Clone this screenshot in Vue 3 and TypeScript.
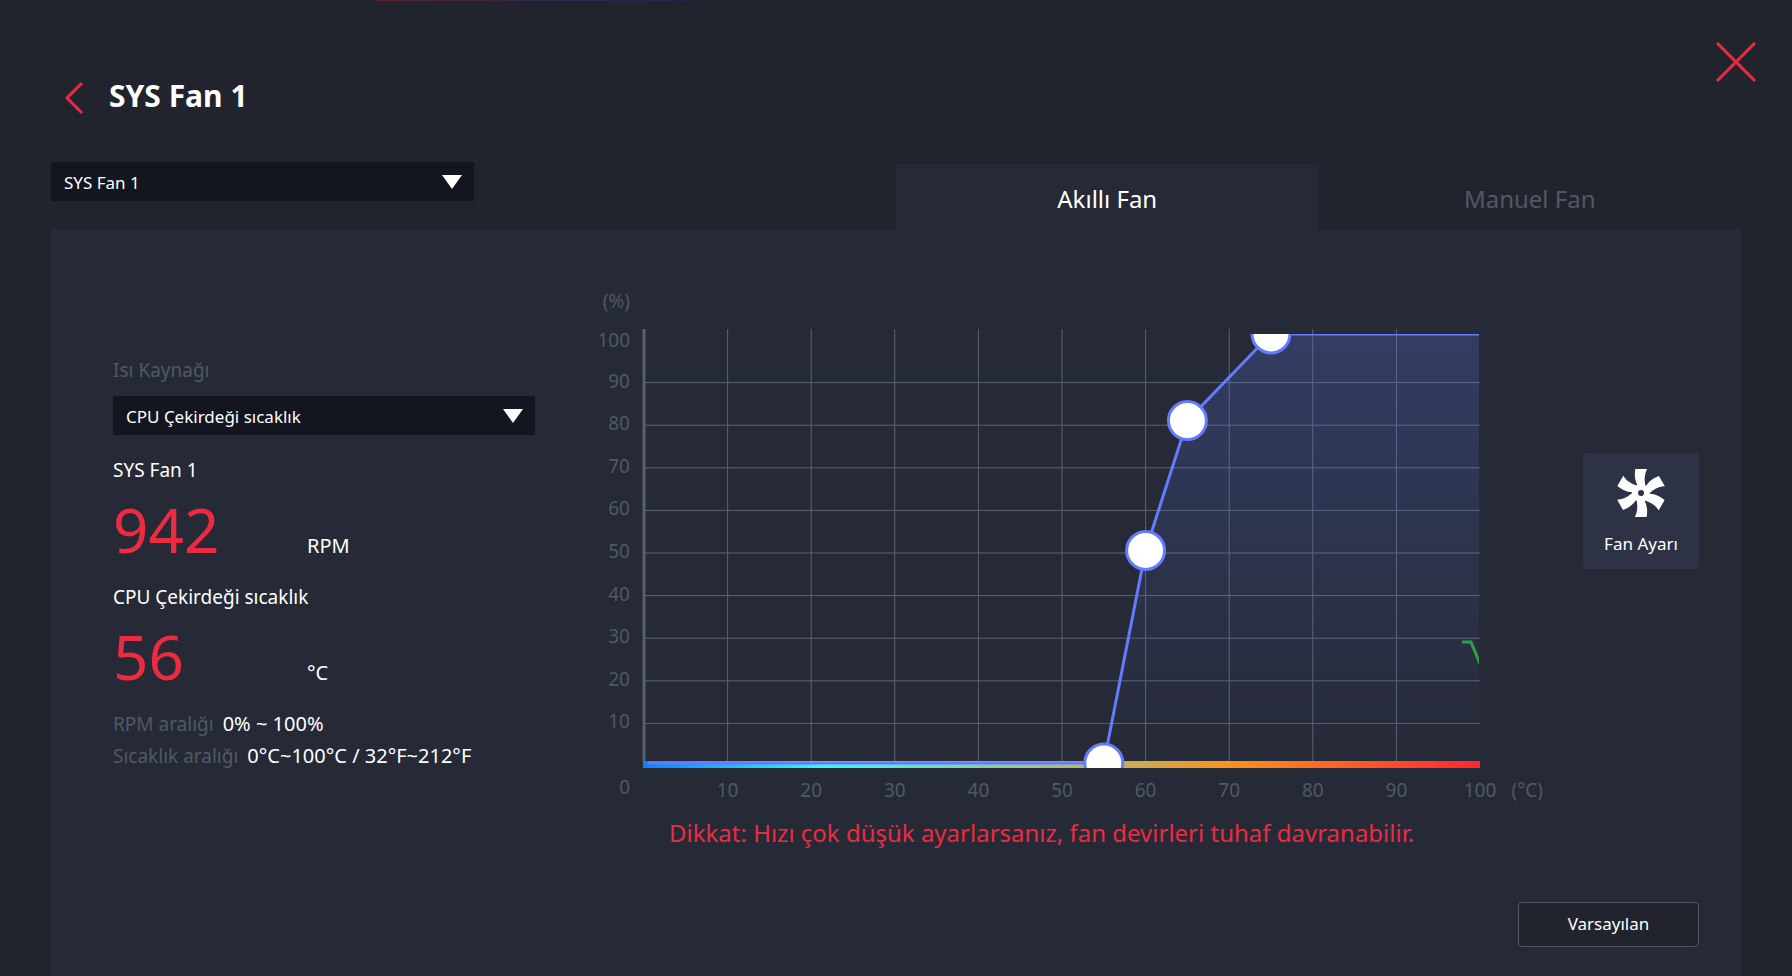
<script setup lang="ts">
import { computed, ref } from 'vue'

interface Point {
  temp: number
  duty: number
}

const fans = ['SYS Fan 1', 'SYS Fan 2', 'CPU Fan 1']
const sources = ['CPU Çekirdeği sıcaklık', 'Sistem sıcaklık']
const tabs = ['Akıllı Fan', 'Manuel Fan']

const fan = ref(fans[0])
const source = ref(sources[0])
const activeTab = ref(tabs[0])
const rpm = ref(942)
const temperature = ref(56)

const points = ref<Point[]>([
  { temp: 55, duty: 0 },
  { temp: 60, duty: 50 },
  { temp: 65, duty: 80 },
  { temp: 75, duty: 100 },
])

// Chart geometry, in viewBox units
const left = 50
const right = 885
const top = 49
const bottom = 478
const steps = [1, 2, 3, 4, 5, 6, 7, 8, 9, 10]

const gridX = (temp: number): number => left + (temp * (right + 1 - left)) / 100
const gridY = (duty: number): number => 481 - duty * 4.26
const plotY = (duty: number): number => Math.min(bottom, 482 - (duty * (482 - top)) / 100)
const labelY = (duty: number): number => (duty === 100 ? 62 : gridY(duty) + 5)

const curve = computed(() => {
  const handles = points.value.map((p) => `${gridX(p.temp)},${plotY(p.duty)}`)
  return [`54,${bottom}`, ...handles, `${right},${top}`].join(' ')
})
const area = computed(() => `${curve.value} ${right},483`)
</script>

<template>
  <main class="page">
    <div class="strip"></div>
    <header class="header">
      <button class="icon-button back" type="button" aria-label="Geri">
        <svg width="20" height="34" viewBox="0 0 20 34">
          <path d="M18 2 3 17 18 32" />
        </svg>
      </button>
      <h1 class="title">{{ fan }}</h1>
      <button class="icon-button close" type="button" aria-label="Kapat">
        <svg width="40" height="40" viewBox="0 0 40 40">
          <path d="M1 1 39 39M39 1 1 39" />
        </svg>
      </button>
    </header>

    <div class="toolbar">
      <div class="select fan-select">
        <select v-model="fan" aria-label="Fan">
          <option v-for="name in fans" :key="name">{{ name }}</option>
        </select>
        <svg class="arrow" width="20" height="14" viewBox="0 0 20 14"><path d="M0 0H20L10 14Z" /></svg>
      </div>
      <div class="tabs" role="tablist">
        <button
          v-for="tab in tabs"
          :key="tab"
          class="tab"
          :class="{ active: tab === activeTab }"
          type="button"
          role="tab"
          :aria-selected="tab === activeTab"
          @click="activeTab = tab"
        >{{ tab }}</button>
      </div>
    </div>

    <section class="panel">
      <div class="content">
        <div class="readings">
          <label class="dim" for="source">Isı Kaynağı</label>
          <div class="select source-select">
            <select id="source" v-model="source">
              <option v-for="name in sources" :key="name">{{ name }}</option>
            </select>
            <svg class="arrow" width="20" height="14" viewBox="0 0 20 14"><path d="M0 0H20L10 14Z" /></svg>
          </div>
          <p class="name">{{ fan }}</p>
          <p class="reading"><strong class="value">{{ rpm }}</strong><span class="unit">RPM</span></p>
          <p class="name">{{ source }}</p>
          <p class="reading"><strong class="value">{{ temperature }}</strong><span class="unit">°C</span></p>
          <dl class="ranges">
            <div class="range"><dt class="dim">RPM aralığı</dt><dd>0% ~ 100%</dd></div>
            <div class="range"><dt class="dim">Sıcaklık aralığı</dt><dd>0°C~100°C / 32°F~212°F</dd></div>
          </dl>
        </div>

        <div class="chart">
          <svg class="plot" viewBox="0 0 955 530" role="img" aria-label="Fan eğrisi">
            <defs>
              <linearGradient id="heat">
                <stop offset="0" stop-color="#0a80ff" />
                <stop offset="0.22" stop-color="#3cf8f4" />
                <stop offset="0.7" stop-color="#fa921e" />
                <stop offset="1" stop-color="#ff2530" />
              </linearGradient>
              <linearGradient id="fill" x1="0" y1="0" x2="0" y2="1">
                <stop offset="0" stop-color="#637cff" stop-opacity="0.22" />
                <stop offset="1" stop-color="#637cff" stop-opacity="0" />
              </linearGradient>
              <clipPath id="frame"><rect x="50" y="49" width="835" height="434" /></clipPath>
            </defs>

            <g class="grid">
              <line class="axis" :x1="left" y1="44" :x2="left" y2="477" />
              <line v-for="s in steps.slice(0, 9)" :key="'v' + s" :x1="gridX(s * 10)" y1="44" :x2="gridX(s * 10)" y2="477" />
              <line v-for="s in steps.slice(0, 9)" :key="'h' + s" :x1="left" :y1="gridY(s * 10)" x2="886" :y2="gridY(s * 10)" />
            </g>
            <rect x="49" y="476" width="837" height="7" fill="url(#heat)" />

            <g clip-path="url(#frame)">
              <polygon :points="area" fill="url(#fill)" />
              <polyline :points="curve" class="curve" />
              <circle v-for="p in points" :key="p.temp" class="handle" :cx="gridX(p.temp)" :cy="plotY(p.duty)" r="19" />
              <polyline class="trace" points="868,357 877,357 886,379" />
            </g>

            <g class="labels">
              <text x="36" y="23" text-anchor="end">(%)</text>
              <text v-for="s in steps" :key="'y' + s" x="36" :y="labelY(s * 10)" text-anchor="end">{{ s * 10 }}</text>
              <text x="36" y="509" text-anchor="end">0</text>
              <text v-for="s in steps" :key="'x' + s" :x="gridX(s * 10)" y="512" text-anchor="middle">{{ s * 10 }}</text>
              <text x="949" y="512" text-anchor="end">(°C)</text>
            </g>
          </svg>
          <p class="warning">Dikkat: Hızı çok düşük ayarlarsanız, fan devirleri tuhaf davranabilir.</p>
        </div>

        <button class="fan-button" type="button">
          <svg width="50" height="50" viewBox="-25 -25 50 50">
            <path
              v-for="s in 6"
              :key="s"
              :transform="`rotate(${s * 60})`"
              d="M-5.7-24H6.2C4-20 3-15 4.300-8L2-6H-3L-3.700-8C-6-13-6.700-17-5.700-24Z"
            />
            <circle class="hub" r="6" />
          </svg>
          <span>Fan Ayarı</span>
        </button>
      </div>

      <button class="default-button" type="button">Varsayılan</button>
    </section>
  </main>
</template>

<style>
body {
  margin: 0;
  background: #22242d;
}
</style>

<style scoped>
.page {
  box-sizing: border-box;
  display: flex;
  flex-direction: column;
  min-height: 100vh;
  padding: 0 51px;
  background: #22242d;
  color: #fff;
  font-family: "Noto Sans", "Open Sans", sans-serif;
  font-size: 19px;
  line-height: 26px;
}

.strip {
  width: 19%;
  height: 1px;
  margin-left: 323px;
  background: linear-gradient(90deg, #5c2130, #33254a, #22254f);
}

button,
select {
  font-family: inherit;
  color: inherit;
  border: 0;
  border-radius: 0;
  cursor: pointer;
}

p,
dl,
dd,
h1 {
  margin: 0;
}

.header {
  display: flex;
  align-items: flex-start;
  height: 161px;
}

.icon-button {
  padding: 0;
  background: none;
  line-height: 0;
}

.icon-button path {
  fill: none;
  stroke: #ec2b41;
  stroke-width: 3;
}

.back {
  margin: 80px 0 0 13px;
}

.title {
  margin: 75px 0 0 25px;
  font-size: 30px;
  line-height: 40px;
  font-weight: 700;
}

.close {
  margin: 41px -15px 0 auto;
}

.toolbar {
  display: flex;
  justify-content: space-between;
  align-items: flex-start;
}

.select {
  position: relative;
  height: 39px;
}

.fan-select {
  width: 25%;
}

.select select {
  width: 100%;
  height: 100%;
  padding: 1px 48px 0 13px;
  appearance: none;
  background: #13151f;
  font-size: 17px;
}

.arrow {
  position: absolute;
  top: 13px;
  right: 12px;
  fill: #fff;
  pointer-events: none;
}

.tabs {
  display: flex;
  width: 50%;
  padding-top: 2px;
}

.tab {
  flex: 1;
  height: 65px;
  padding: 3px 0 0;
  background: none;
  color: #4f5966;
  font-size: 24px;
}

.tab.active {
  background: #262a36;
  color: #fff;
}

.panel {
  flex: 1;
  display: flex;
  flex-direction: column;
  padding: 56px 42px 29px 62px;
  background: #262a36;
}

.content {
  display: flex;
  align-items: flex-start;
}

.readings {
  flex: 0 0 422px;
  padding-top: 72px;
}

.dim {
  color: #4f5966;
}

.source-select {
  margin: 13px 0 22px;
}

.reading {
  display: flex;
  align-items: baseline;
  margin: 14px 0 23px;
}

.value {
  width: 194px;
  color: #ec2b41;
  font-size: 62px;
  line-height: 64px;
  font-weight: 400;
}

.unit,
dd {
  font-size: 20px;
}

.ranges {
  display: grid;
  gap: 6px;
}

.range {
  display: flex;
  gap: 9px;
}

.chart {
  flex: 1;
  min-width: 0;
  margin: 0 34px 0 59px;
}

.plot {
  display: block;
  width: 100%;
}

.grid line {
  stroke: #5a6372;
  stroke-width: 1;
}

.grid .axis {
  stroke: #566070;
  stroke-width: 3;
}

.curve {
  fill: none;
  stroke: #637cff;
  stroke-width: 3;
}

.handle {
  fill: #fff;
  stroke: #637cff;
  stroke-width: 3;
}

.trace {
  fill: none;
  stroke: #2fa043;
  stroke-width: 3;
}

.labels text {
  fill: #4f5966;
  font-size: 19px;
}

.warning {
  margin: 1px 0 0 75px;
  color: #ec2b41;
  font-size: 24px;
  line-height: 34px;
}

.fan-button {
  flex: 0 0 116px;
  height: 116px;
  margin-top: 168px;
  padding: 15px 0 0;
  display: flex;
  flex-direction: column;
  align-items: center;
  gap: 14px;
  border-radius: 3px;
  background: #2d3345;
  font-size: 17px;
  line-height: 24px;
}

.fan-button svg {
  flex: none;
}

.fan-button path {
  fill: #fff;
}

.hub {
  fill: none;
  stroke: #fff;
  stroke-width: 6;
}

.default-button {
  width: 181px;
  height: 45px;
  margin: auto 0 0 auto;
  padding: 0 0 3px;
  border: 1px solid #4f5966;
  border-radius: 4px;
  background: #22242d;
  font-size: 17px;
}
</style>
